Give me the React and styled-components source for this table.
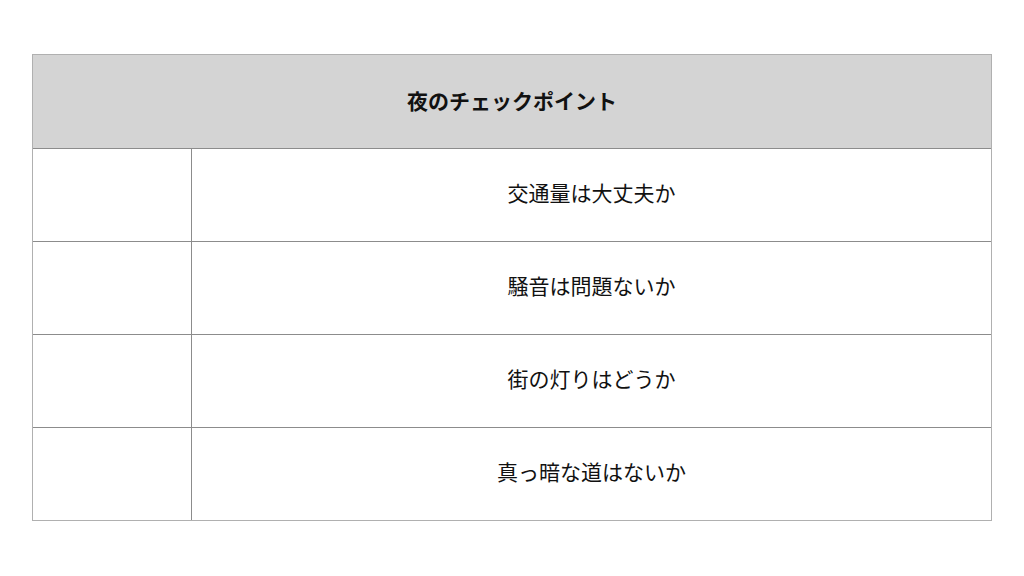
import React from 'react';
import styled, { createGlobalStyle } from 'styled-components';

const GlobalStyle = createGlobalStyle`
  body {
    margin: 0;
    background: #fff;
    font-family: "Noto Sans CJK JP", "Noto Sans", sans-serif;
    color: #111;
  }
`;

const Page = styled.div`
  width: 1024px;
  height: 576px;
  padding: 54px 32px 0;
  box-sizing: border-box;
`;

const Table = styled.div`
  width: 960px;
  border: 1px solid #b0b0b0;
  box-sizing: border-box;
`;

const Header = styled.div`
  height: 94px;
  box-sizing: border-box;
  padding-bottom: 4px;
  background: #d4d4d4;
  display: flex;
  align-items: center;
  justify-content: center;
  font-size: 21px;
  font-weight: 700;
  border-bottom: 1px solid #8c8c8c;
`;

const Row = styled.div`
  display: grid;
  grid-template-columns: 159px 1fr;
  height: 92px;
  border-bottom: ${(p) => (p.last ? 'none' : '1px solid #8c8c8c')};
`;

const LabelCell = styled.div`
  border-right: 1px solid #8c8c8c;
`;

const TextCell = styled.div`
  display: flex;
  align-items: center;
  justify-content: center;
  padding-bottom: 7px;
  font-size: 21px;
  font-weight: 400;
`;

const items = [
  '交通量は大丈夫か',
  '騒音は問題ないか',
  '街の灯りはどうか',
  '真っ暗な道はないか',
];

export default function App() {
  return (
    <Page>
      <GlobalStyle />
      <Table>
        <Header>夜のチェックポイント</Header>
        {items.map((text, i) => (
          <Row key={text} last={i === items.length - 1}>
            <LabelCell />
            <TextCell>{text}</TextCell>
          </Row>
        ))}
      </Table>
    </Page>
  );
}
